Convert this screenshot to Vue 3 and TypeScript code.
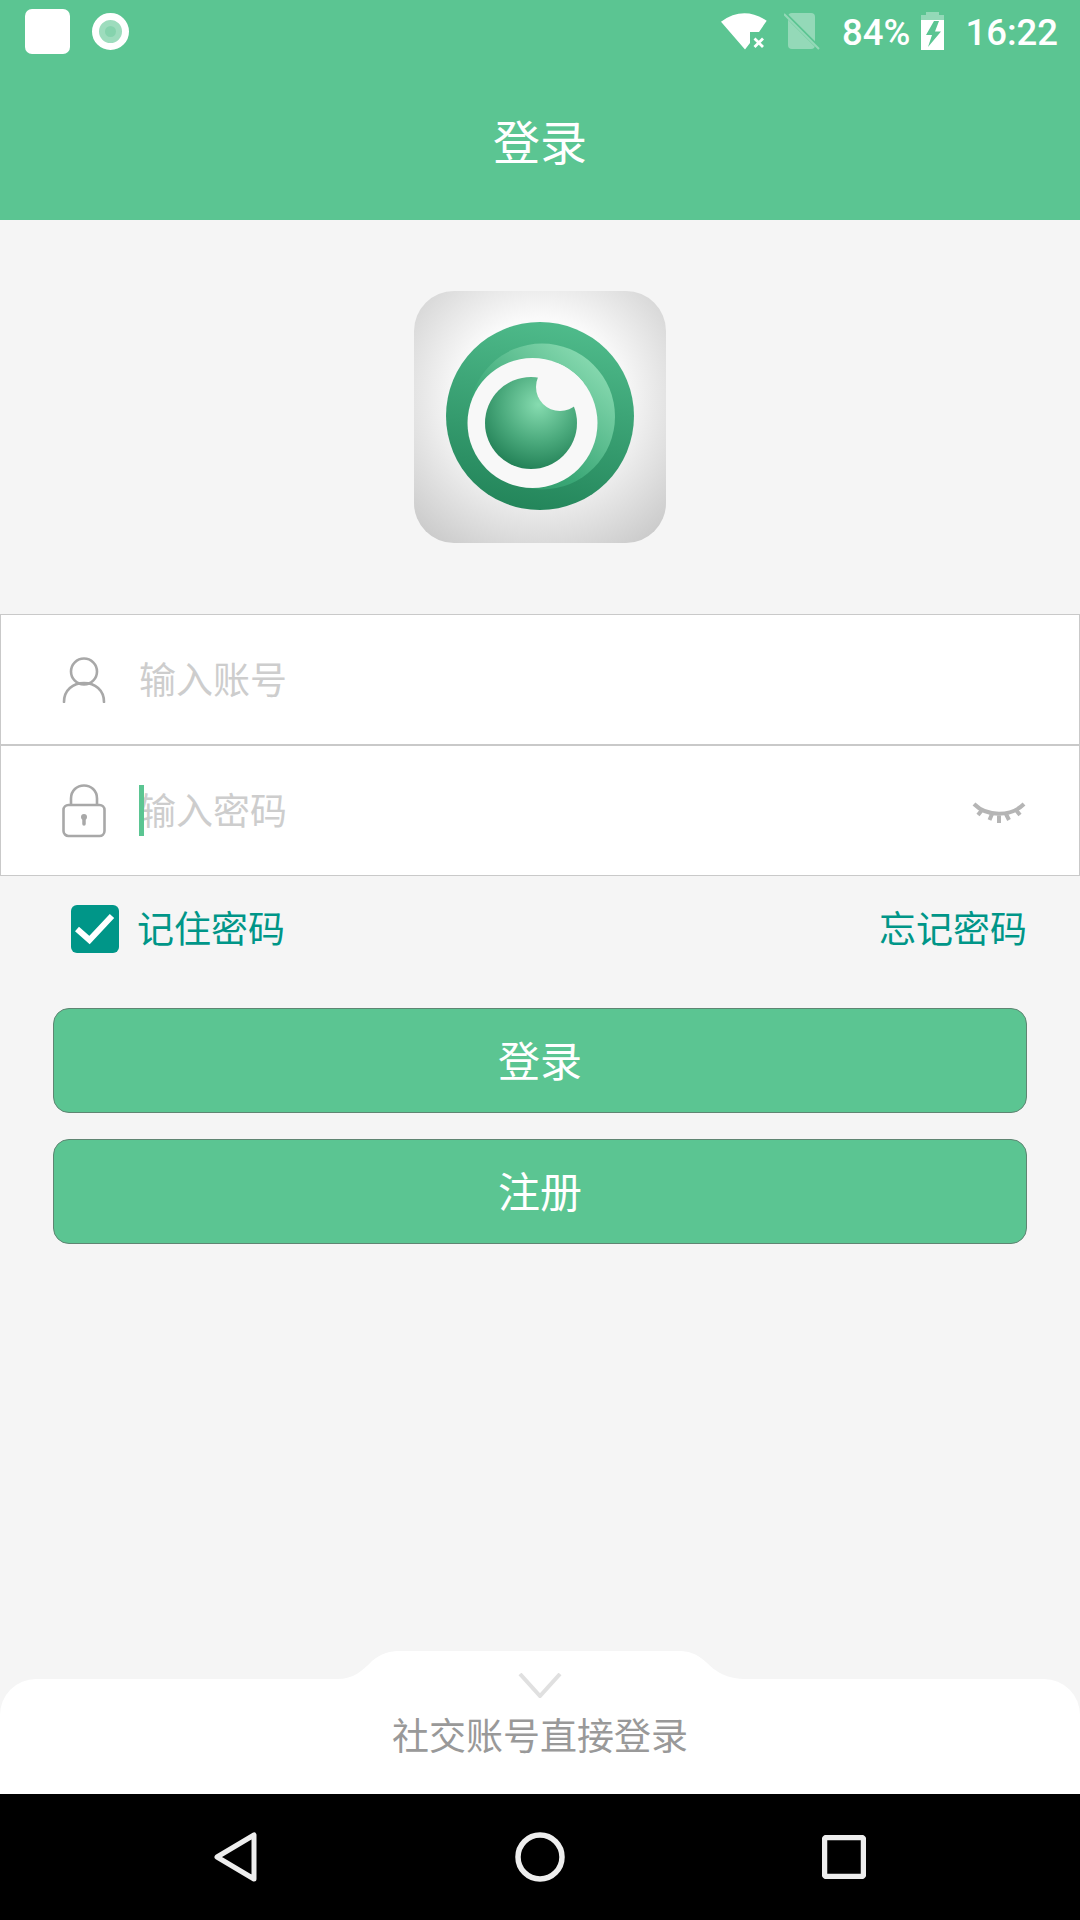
<script setup lang="ts">
import { ref } from 'vue'

const account = ref('')
const password = ref('')
const remember = ref(true)
</script>

<template>
  <div class="page">
    <header class="top">
      <div class="status">
        <span class="notif-square"></span>
        <span class="notif-ring"><i></i></span>
        <span class="status-gap"></span>
        <svg class="wifi" width="48" height="38" viewBox="0 0 48 38">
          <path d="M1 9.7Q23.5-6.5 46.7 8.7L39 20H30V31L25 37.5Z" fill="#fff" />
          <path d="M34.500 26.500L43 35M43 26.500L34.500 35" stroke="#fff" stroke-width="2.800" />
        </svg>
        <svg class="sim" width="36" height="40" viewBox="0 0 36 40">
          <path d="M4 6Q4 2 8 2H27Q31 2 31 6V34Q31 38 27 38H8Q4 38 4 34Z" fill="#fff" fill-opacity=".35" />
          <path d="M-1 1L36 38" stroke="#5bc592" stroke-width="4" />
          <path d="M0 3L35 38" stroke="#fff" stroke-opacity=".35" stroke-width="2" />
        </svg>
        <span class="pct">84%</span>
        <svg class="batt" width="23" height="38" viewBox="0 0 23 38">
          <path d="M5 0H18V3H23V8H0V3H5Z" fill="#fff" fill-opacity=".35" />
          <path d="M0 8H23V38H0Z" fill="#fff" />
          <path d="M13 9L5 23H11L7 35L20 19.500H14L18 9Z" fill="#5bc592" />
        </svg>
        <span class="clock">16:22</span>
      </div>
      <h1 class="title">登录</h1>
    </header>

    <main class="body">
      <div class="logo-wrap">
        <svg class="logo" width="252" height="252" viewBox="0 0 252 252">
          <defs>
            <radialGradient id="tile" cx="50%" cy="42%" r="78%">
              <stop offset="0.4" stop-color="#fafafa" />
              <stop offset="1" stop-color="#c2c2c2" />
            </radialGradient>
            <linearGradient id="outer" x1="0.6" y1="0" x2="0.4" y2="1">
              <stop offset="0" stop-color="#4fbb8b" />
              <stop offset="1" stop-color="#23855a" />
            </linearGradient>
            <linearGradient id="crescent" x1="0.9" y1="0.1" x2="0.2" y2="0.9">
              <stop offset="0" stop-color="#8bdcb3" />
              <stop offset="0.7" stop-color="#3ba877" />
              <stop offset="1" stop-color="#2f9868" />
            </linearGradient>
            <radialGradient id="iris" cx="58%" cy="30%" r="75%">
              <stop offset="0" stop-color="#86dcb0" />
              <stop offset="0.55" stop-color="#4aa97c" />
              <stop offset="1" stop-color="#1f7d53" />
            </radialGradient>
            <clipPath id="ring-clip">
              <circle cx="118.500" cy="132" r="65" />
            </clipPath>
          </defs>
          <rect width="252" height="252" rx="40" fill="url(#tile)" />
          <circle cx="126" cy="125" r="94" fill="url(#outer)" />
          <circle cx="128" cy="125.500" r="73" fill="url(#crescent)" />
          <circle cx="118.500" cy="132" r="65" fill="#f8f8f8" />
          <circle cx="117" cy="132" r="46" fill="url(#iris)" />
          <circle cx="146" cy="96" r="24" fill="#f8f8f8" clip-path="url(#ring-clip)" />
        </svg>
      </div>

      <div class="field">
        <svg class="field-icon" width="44" height="46" viewBox="0 0 44 46" fill="none" stroke="#a8a8a8" stroke-width="2.600">
          <circle cx="22" cy="14.500" r="13" />
          <path d="M2 45C2 33 11 26 22 26S42 33 42 45" stroke-linecap="round" />
        </svg>
        <input v-model="account" class="field-input" placeholder="输入账号" />
      </div>
      <div class="field">
        <svg class="field-icon" width="44" height="54" viewBox="0 0 44 54" fill="none" stroke="#a8a8a8" stroke-width="2.600">
          <path d="M9 21V14.500C9 6.500 15 1.500 22 1.500S35 6.500 35 14.500V21" />
          <rect x="1.500" y="21" width="41" height="31" rx="5" />
          <path d="M22 33V40" stroke-width="3.500" stroke-linecap="round" />
          <circle cx="22" cy="33" r="3" fill="#a8a8a8" stroke="none" />
        </svg>
        <div class="input-wrap">
          <input v-model="password" class="field-input" type="password" placeholder="输入密码" />
          <span class="caret"></span>
        </div>
        <svg class="eye" width="54" height="24" viewBox="0 0 54 24" fill="none" stroke="#b5b5b5" stroke-width="4">
          <path d="M2 2C15 15 39 15 52 2" />
          <path d="M10 8L6 13M20 12L17.500 18M27 13.500V21M34 12L37 18M44 8L48 13" />
        </svg>
      </div>

      <div class="options">
        <label class="remember">
          <span class="check" :class="{ on: remember }" @click="remember = !remember">
            <svg width="48" height="48" viewBox="0 0 48 48" fill="none">
              <path d="M6 24L18.500 35L41 11" stroke="#fff" stroke-width="6" />
            </svg>
          </span>
          <span class="opt-text">记住密码</span>
        </label>
        <a class="opt-text">忘记密码</a>
      </div>

      <div class="actions">
        <button class="btn">登录</button>
        <button class="btn">注册</button>
      </div>
    </main>

    <section class="social">
      <svg class="tab" width="420" height="30" viewBox="0 0 420 30">
        <path d="M0 30V28H7C24 28 32 20 42 10C52 2 60 0 70 0H348C358 0 366 2 376 11C386 21 396 28 417 28H420V30Z" fill="#fff" />
      </svg>
      <svg class="chevron" width="44" height="25" viewBox="0 0 44 25" fill="none">
        <path d="M2 1L22 23L42 1" stroke="#e0e0e0" stroke-width="4" />
      </svg>
      <span class="social-text">社交账号直接登录</span>
    </section>

    <nav class="navbar">
      <svg width="44" height="50" viewBox="0 0 44 50" fill="none" stroke="#eee" stroke-width="5" stroke-linejoin="round">
        <path d="M40 3V47L3 25Z" />
      </svg>
      <svg width="50" height="50" viewBox="0 0 50 50" fill="none" stroke="#eee" stroke-width="5.500">
        <circle cx="25" cy="25" r="22" />
      </svg>
      <svg width="44" height="44" viewBox="0 0 44 44" fill="none" stroke="#eee" stroke-width="5.500">
        <rect x="2.500" y="2.500" width="39" height="39" rx="2" />
      </svg>
    </nav>
  </div>
</template>

<style>
body {
  margin: 0;
  background: #f5f5f5;
}
</style>

<style scoped>
.page {
  width: 1080px;
  height: 1920px;
  display: flex;
  flex-direction: column;
  overflow: hidden;
  background: #f5f5f5;
  font-family: "Noto Sans CJK SC", "Noto Sans", sans-serif;
}

.top {
  height: 220px;
  background: #5bc592;
  color: #fff;
}

.status {
  height: 62px;
  display: flex;
  align-items: center;
  padding: 0 22px 0 25px;
  font-family: Roboto, sans-serif;
  font-weight: 500;
  font-size: 36.500px;
}

.notif-square {
  width: 45px;
  height: 45px;
  border-radius: 7px;
  background: #fff;
}

.notif-ring {
  width: 37px;
  height: 37px;
  margin-left: 22px;
  box-sizing: border-box;
  border: 7px solid #fff;
  border-radius: 50%;
  background: #9ddcbd;
  display: flex;
  align-items: center;
  justify-content: center;
}

.notif-ring i {
  width: 11px;
  height: 11px;
  border-radius: 50%;
  background: #85d3ad;
}

.status-gap {
  flex: 1;
}

.sim {
  margin-left: 16px;
}

.pct {
  margin-left: 22px;
  padding-top: 3px;
}

.batt {
  margin-left: 11px;
}

.clock {
  margin-left: 21px;
  padding-top: 3px;
}

.title {
  margin: 0;
  height: 154px;
  display: flex;
  align-items: center;
  justify-content: center;
  font-size: 47px;
  font-weight: 400;
}

.body {
  flex: 1;
  display: flex;
  flex-direction: column;
}

.logo-wrap {
  display: flex;
  justify-content: center;
  padding: 71px 0;
}

.logo {
  display: block;
}

.field {
  height: 131px;
  box-sizing: border-box;
  flex-shrink: 0;
  display: flex;
  align-items: center;
  padding: 0 53px 0 61px;
  background: #fff;
  border: 1px solid #c9c9c9;
}

.field-icon {
  flex-shrink: 0;
}

.field-input {
  width: 400px;
  height: 60px;
  box-sizing: content-box;
  margin-left: 33px;
  padding: 0 0 4px;
  border: 0;
  outline: 0;
  background: none;
  font-family: inherit;
  font-size: 37px;
  color: #333;
}

.field-input::placeholder {
  color: #cdcdcd;
}

.input-wrap {
  position: relative;
  flex: 1;
  display: flex;
}

.caret {
  position: absolute;
  left: 33px;
  top: 6px;
  width: 5px;
  height: 51px;
  background: #5bc592;
}

.eye {
  flex-shrink: 0;
  margin-top: 7px;
}

.options {
  height: 132px;
  box-sizing: border-box;
  flex-shrink: 0;
  display: flex;
  align-items: center;
  justify-content: space-between;
  padding: 0 53px 27px 71px;
  font-size: 37px;
  color: #009688;
}

.opt-text {
  padding-bottom: 4px;
}

.remember {
  display: flex;
  align-items: center;
}

.check {
  width: 48px;
  height: 48px;
  margin-right: 18px;
  border-radius: 6px;
  background: #009688;
}

.check svg {
  display: block;
}

.actions {
  display: flex;
  flex-direction: column;
  gap: 26px;
  padding: 0 53px;
}

.btn {
  height: 105px;
  padding: 0 0 4px;
  border: 1px solid #5f8572;
  border-radius: 16px;
  background: #5bc592;
  color: #fff;
  font-family: inherit;
  font-size: 42px;
}

.social {
  position: relative;
  height: 115px;
  box-sizing: border-box;
  padding-bottom: 6px;
  flex-shrink: 0;
  display: flex;
  align-items: center;
  justify-content: center;
  background: #fff;
  border-radius: 36px 36px 0 0;
}

.tab {
  position: absolute;
  left: 330px;
  top: -28px;
}

.chevron {
  position: absolute;
  left: 518px;
  top: -6px;
}

.social-text {
  font-size: 37px;
  color: #999;
}

.navbar {
  height: 126px;
  box-sizing: border-box;
  flex-shrink: 0;
  display: flex;
  align-items: center;
  background: #000;
  padding: 0 214px;
  justify-content: space-between;
}
</style>
